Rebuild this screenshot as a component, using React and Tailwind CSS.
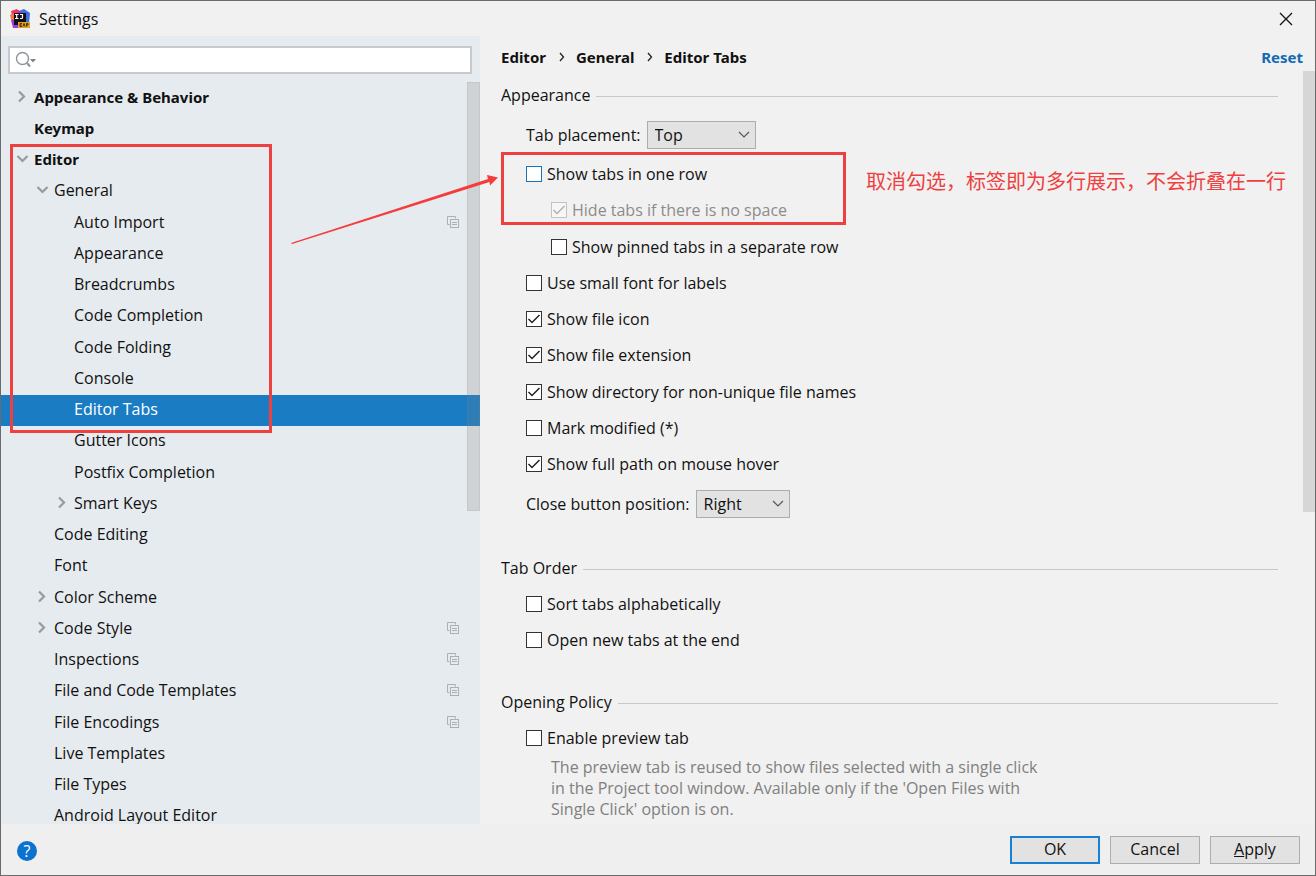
import { useState } from 'react';
import { clsx } from 'clsx';

const tree = [
  { label: 'Appearance & Behavior', level: 0, arrow: 'right' },
  { label: 'Keymap', level: 0 },
  { label: 'Editor', level: 0, arrow: 'down' },
  { label: 'General', level: 1, arrow: 'down' },
  { label: 'Auto Import', level: 2, project: true },
  { label: 'Appearance', level: 2 },
  { label: 'Breadcrumbs', level: 2 },
  { label: 'Code Completion', level: 2 },
  { label: 'Code Folding', level: 2 },
  { label: 'Console', level: 2 },
  { label: 'Editor Tabs', level: 2 },
  { label: 'Gutter Icons', level: 2 },
  { label: 'Postfix Completion', level: 2 },
  { label: 'Smart Keys', level: 2, arrow: 'right' },
  { label: 'Code Editing', level: 1 },
  { label: 'Font', level: 1 },
  { label: 'Color Scheme', level: 1, arrow: 'right' },
  { label: 'Code Style', level: 1, arrow: 'right', project: true },
  { label: 'Inspections', level: 1, project: true },
  { label: 'File and Code Templates', level: 1, project: true },
  { label: 'File Encodings', level: 1, project: true },
  { label: 'Live Templates', level: 1 },
  { label: 'File Types', level: 1 },
  { label: 'Android Layout Editor', level: 1 },
];

const indents = ['pl-[12px]', 'pl-[32px]', 'pl-[52px]'];

const appearanceOptions = [
  { label: 'Show tabs in one row', focused: true },
  { label: 'Hide tabs if there is no space', checked: true, disabled: true, nested: true },
  { label: 'Show pinned tabs in a separate row', nested: true },
  { label: 'Use small font for labels' },
  { label: 'Show file icon', checked: true },
  { label: 'Show file extension', checked: true },
  { label: 'Show directory for non-unique file names', checked: true },
  { label: 'Mark modified (*)' },
  { label: 'Show full path on mouse hover', checked: true },
];

function AppLogo() {
  return (
    <svg width="20" height="20" viewBox="0 0 20 20" aria-hidden="true">
      <path d="M1 2 L7 0 L10 4 L8 12 L3 11 Z" fill="#f0365f" />
      <path d="M0 6 L4 4 L6 12 L2 14 Z" fill="#f4763b" />
      <path d="M1 11 L8 10 L8 19 L3 19 Z" fill="#9a3fd8" />
      <path d="M9 2 L14 0 L20 4 L19 15 L10 14 Z" fill="#3f6fe0" />
      <path d="M8 1 L12 3 L11 8 L7 8 Z" fill="#a33bc4" />
      <rect x="4" y="4" width="12" height="12" fill="#14101a" />
      <path d="M5 5.500h3.500M6.700 5.500v4M5 9.500h3.500M10 5.500h2.500v3q0 1-1 1h-1.500" stroke="#fff" strokeWidth="1.200" fill="none" />
      <rect x="8" y="13" width="12" height="6" fill="#e0a32a" />
      <path d="M12 14.500h-2v3h2M10 16h1.800M13 17.500l1-3 1 3M16.500 17.500v-3h1.500v1.700h-1.500" stroke="#3a2505" strokeWidth="0.900" fill="none" />
    </svg>
  );
}

function TreeArrow({ dir }) {
  return (
    <svg className="shrink-0" width="16" height="16" viewBox="0 0 16 16" fill="none" stroke="#959ba0" strokeWidth="2.200" aria-hidden="true">
      {dir === 'right' && <path d="M6 2.500 L11 7.500 L6 12.500" />}
      {dir === 'down' && <path d="M4.500 5 L9.500 10 L14.500 5" />}
    </svg>
  );
}

function ProjectIcon() {
  return (
    <svg className="ml-auto mr-[21px] shrink-0" width="12" height="12" viewBox="0 0 12 12" fill="none" stroke="#aab1b6" aria-hidden="true">
      <path d="M8.500 2.500 V0.500 H0.500 V8.500 H2.500" />
      <rect x="3.500" y="3.500" width="8" height="8" />
      <path d="M5 6.500 H10 M5 8.500 H10" />
    </svg>
  );
}

function Check({ label, checked, disabled, focused, nested }) {
  return (
    <li className={nested ? 'pl-[50px]' : 'pl-[25px]'}>
      <label className={clsx('flex h-9 w-fit items-center', disabled && 'text-[#8c8c8c]')}>
        <span className="relative mr-[5px] size-4 shrink-0">
          <input
            type="checkbox"
            defaultChecked={checked}
            disabled={disabled}
            className={clsx(
              'peer block size-4 appearance-none border outline-none',
              disabled ? 'border-[#c3c3c3] bg-[#f7f7f7]' : 'bg-white',
              !disabled && (focused ? 'border-[#1a73b8]' : 'border-[#333]')
            )}
          />
          <svg
            className={clsx('pointer-events-none absolute inset-0 hidden peer-checked:block', disabled ? 'text-[#b0b0b0]' : 'text-[#222]')}
            width="16"
            height="16"
            viewBox="0 0 16 16"
            fill="none"
            stroke="currentColor"
            strokeWidth="1.500"
          >
            <path d="M2.500 8 L6 11.500 L13.500 4" />
          </svg>
        </span>
        {label}
      </label>
    </li>
  );
}

function Dropdown({ id, label, options, width, className }) {
  return (
    <div className={clsx('flex items-center pl-[25px]', className)}>
      <label htmlFor={id} className="mr-1.5">{label}</label>
      <div className={clsx('relative', width)}>
        <select id={id} className="h-7 w-full appearance-none border border-[#adadad] bg-[#e2e2e2] pl-[7px] outline-none">
          {options.map((o) => (
            <option key={o}>{o}</option>
          ))}
        </select>
        <svg className="pointer-events-none absolute right-[6px] top-2" width="12" height="12" viewBox="0 0 12 12" fill="none" stroke="#555" strokeWidth="1.200">
          <path d="M1 3 L6 8 L11 3" />
        </svg>
      </div>
    </div>
  );
}

function SectionTitle({ children, className }) {
  return (
    <div className={clsx('mr-[37px] flex h-[25px] items-center gap-1.5', className)}>
      <h2 className="pb-0.5">{children}</h2>
      <div className="mt-0.5 h-px flex-1 bg-[#c8c8c8]" />
    </div>
  );
}

function Sidebar() {
  const [selected, setSelected] = useState('Editor Tabs');
  return (
    <aside className="flex w-[479px] shrink-0 flex-col bg-[#e6ebef]">
      <div className="relative ml-[7px] mr-2 mt-[10px] h-7">
        <input type="text" aria-label="Search settings" className="h-7 w-full border-2 border-[#c6cace] bg-white pl-9 outline-none" />
        <svg className="pointer-events-none absolute left-[7px] top-[5px]" width="22" height="18" viewBox="0 0 22 18" fill="none" stroke="#8f959a" strokeWidth="1.400" aria-hidden="true">
          <circle cx="7.500" cy="7.500" r="6" />
          <path d="M12 12 L15 15.500" strokeWidth="2" />
          <path d="M15 8 H21 L18 11.500 Z" fill="#7d8388" stroke="none" />
        </svg>
      </div>
      <div className="relative mt-2 min-h-0 flex-1 overflow-hidden">
        <ul className="pt-px">
          {tree.map((node) => (
            <li key={node.label} className="nth-[4n]:pb-px">
              <button
                type="button"
                onClick={() => setSelected(node.label)}
                className={clsx(
                  'flex h-[31px] w-full items-center gap-[5px] pb-1 text-left',
                  indents[node.level],
                  node.level === 0 && "font-['Noto_Sans',sans-serif] text-[15px] font-bold",
                  selected === node.label && 'bg-[#1a7dc4] text-white'
                )}
              >
                <TreeArrow dir={node.arrow} />
                {node.label}
                {node.project && <ProjectIcon />}
              </button>
            </li>
          ))}
        </ul>
        <div className="absolute right-0 top-0 h-[429px] w-[13px] border border-[#80808020] bg-[#80808038]" />
      </div>
    </aside>
  );
}

function Content() {
  return (
    <main className="relative flex min-w-0 flex-1 flex-col pl-[21px]">
      <div className="flex h-[35px] shrink-0 items-center pr-3 pt-1.5 font-['Noto_Sans',sans-serif] text-[15px] font-bold">
        <nav className="flex items-center">
          {['Editor', 'General', 'Editor Tabs'].map((crumb, i) => (
            <span key={crumb} className="flex items-center">
              {i > 0 && (
                <svg className="ml-[13px] mr-[11px]" width="6" height="10" viewBox="0 0 6 10" fill="none" stroke="#222" strokeWidth="1.300">
                  <path d="M1 1 L4.500 5 L1 9" />
                </svg>
              )}
              {crumb}
            </span>
          ))}
        </nav>
        <a href="#reset" className="ml-auto text-[#1369b4]">Reset</a>
      </div>
      <div className="relative min-h-0 flex-1 overflow-hidden">
        <SectionTitle className="mt-3">Appearance</SectionTitle>
        <Dropdown id="placement" label="Tab placement:" options={['Top', 'Bottom', 'Left', 'Right', 'None']} width="w-[109px]" className="mb-[7px] mt-[13px]" />
        <ul className="[&>li:nth-child(4n+2)]:pb-px">
          {appearanceOptions.map((o) => (
            <Check key={o.label} {...o} />
          ))}
        </ul>
        <Dropdown id="close-position" label="Close button position:" options={['Right', 'Left', 'None']} width="w-[94px]" className="mt-2" />

        <SectionTitle className="mb-[5px] mt-[38px]">Tab Order</SectionTitle>
        <ul>
          <Check label="Sort tabs alphabetically" />
          <Check label="Open new tabs at the end" />
        </ul>

        <SectionTitle className="mb-[5px] mt-8">Opening Policy</SectionTitle>
        <ul>
          <Check label="Enable preview tab" />
        </ul>
        <p className="mt-px w-[540px] pl-[50px] leading-[21px] text-[#808080]">
          The preview tab is reused to show files selected with a single click in the Project tool window. Available only if the 'Open Files with Single Click' option is on.
        </p>
        <div className="absolute right-0 top-0 h-[441px] w-3 bg-[#d6d6d6]" />
      </div>
    </main>
  );
}

// Red marks drawn over the dialog
function Annotations() {
  return (
    <div className="pointer-events-none absolute inset-0">
      <div className="absolute left-[9px] top-[143px] h-[289px] w-[262px] border-3 border-[#ee4040]" />
      <div className="absolute left-[500px] top-[151px] h-[73px] w-[345px] border-3 border-[#ee4040]" />
      <svg className="absolute left-[290px] top-[169px]" width="210" height="76" viewBox="0 0 210 76" fill="#f53b3b">
        <path d="M0 73 L197 9 L196 5 L207 7.500 L199 15.500 L198.500 12 L1 74 Z" />
      </svg>
      <p className="absolute left-[865px] top-[165px] whitespace-nowrap font-['Noto_Sans_CJK_SC',sans-serif] text-[20px] leading-[30px] text-[#ee4040]">
        取消勾选，标签即为多行展示，不会折叠在一行
      </p>
    </div>
  );
}

export default function App() {
  const button = 'h-7 w-[90px] bg-[#e2e2e2] pb-0.5';
  return (
    <div className="relative flex h-screen flex-col overflow-hidden border border-[#6b6b6b] bg-[#f1f1f1] font-['Open_Sans','Noto_Sans_CJK_SC',sans-serif] text-[16px] leading-5 text-[#111]">
      <header className="flex h-[35px] shrink-0 items-center pl-[9px] pr-[22px]">
        <AppLogo />
        <h1 className="ml-[9px]">Settings</h1>
        <button type="button" aria-label="Close" className="ml-auto">
          <svg width="14" height="14" viewBox="0 0 14 14" stroke="#111" strokeWidth="1.300">
            <path d="M1 1 L13 13 M13 1 L1 13" />
          </svg>
        </button>
      </header>
      <div className="flex min-h-0 flex-1">
        <Sidebar />
        <Content />
      </div>
      <footer className="flex h-[51px] shrink-0 items-center gap-[10px] bg-[#efefef] pl-4 pr-[15px]">
        <button type="button" aria-label="Help" className="mr-auto mt-0.5 flex size-5 items-center justify-center rounded-full bg-[#0b72d0] text-white">
          ?
        </button>
        <button type="button" className={clsx(button, 'border-2 border-[#1a80d4]')}>OK</button>
        <button type="button" className={clsx(button, 'border border-[#adadad]')}>Cancel</button>
        <button type="button" className={clsx(button, 'border border-[#adadad]')}>
          <span className="underline">A</span>pply
        </button>
      </footer>
      <Annotations />
    </div>
  );
}
